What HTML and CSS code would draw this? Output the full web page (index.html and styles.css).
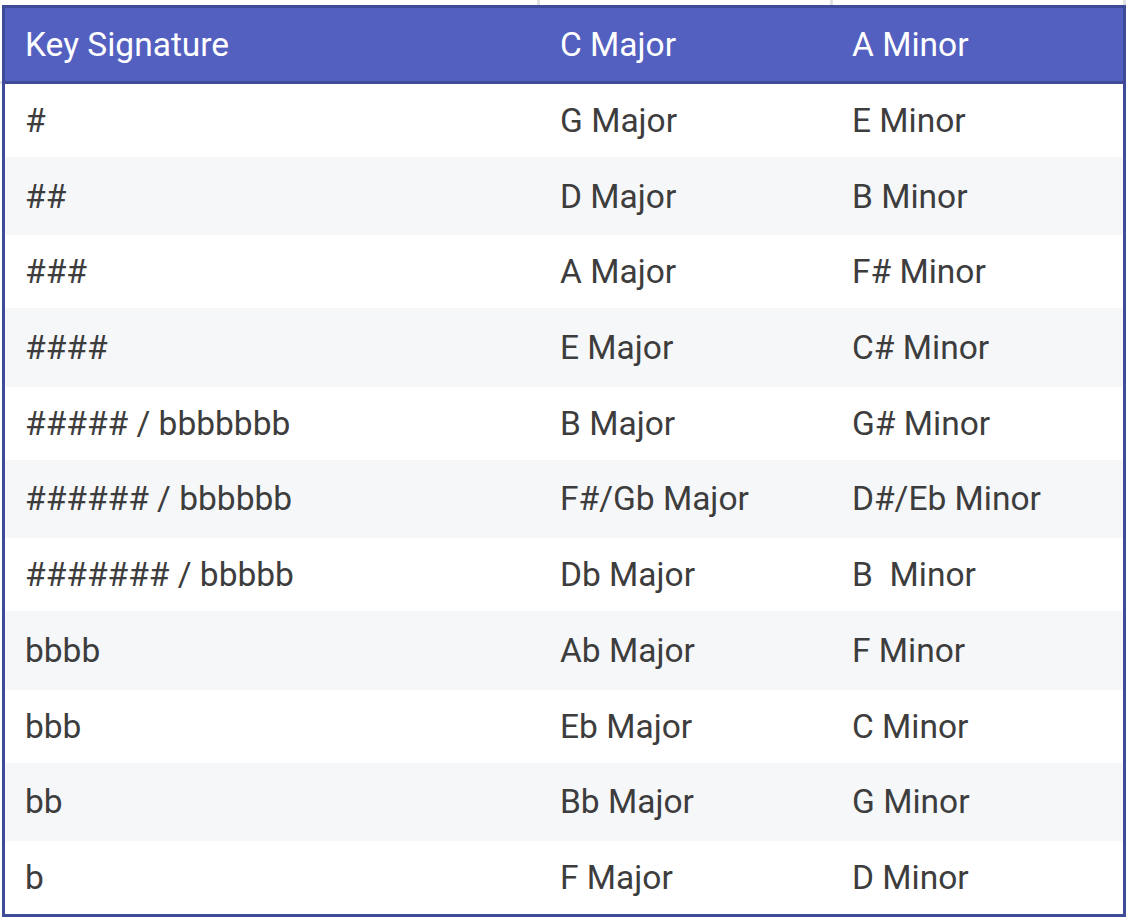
FILE: index.html
```html
<!DOCTYPE html>
<html lang="en">
<head>
<meta charset="utf-8">
<title>Key Signatures</title>
<link rel="stylesheet" href="styles.css">
</head>
<body>
<div class="sheet">
<table class="keys">
  <colgroup>
    <col class="c1">
    <col class="c2">
    <col class="c3">
  </colgroup>
  <thead>
    <tr><th>Key Signature</th><th>C Major</th><th>A Minor</th></tr>
  </thead>
  <tbody>
    <tr><td>#</td><td>G Major</td><td>E Minor</td></tr>
    <tr><td>##</td><td>D Major</td><td>B Minor</td></tr>
    <tr><td>###</td><td>A Major</td><td>F# Minor</td></tr>
    <tr><td>####</td><td>E Major</td><td>C# Minor</td></tr>
    <tr><td>##### / bbbbbbb</td><td>B Major</td><td>G# Minor</td></tr>
    <tr><td>###### / bbbbbb</td><td>F#/Gb Major</td><td>D#/Eb Minor</td></tr>
    <tr><td>####### / bbbbb</td><td>Db Major</td><td>B&nbsp; Minor</td></tr>
    <tr><td>bbbb</td><td>Ab Major</td><td>F Minor</td></tr>
    <tr><td>bbb</td><td>Eb Major</td><td>C Minor</td></tr>
    <tr><td>bb</td><td>Bb Major</td><td>G Minor</td></tr>
    <tr><td>b</td><td>F Major</td><td>D Minor</td></tr>
  </tbody>
</table>
</div>
</body>
</html>
```
FILE: styles.css
```css
html, body {
  margin: 0;
  padding: 0;
  background: #ffffff;
}

.sheet {
  width: 1130px;
  height: 922px;
  padding: 5px 0 0 2px;
  box-sizing: border-box;
  background-image:
    linear-gradient(#e2e2e2, #e2e2e2),
    linear-gradient(#e2e2e2, #e2e2e2),
    linear-gradient(#e2e2e2, #e2e2e2),
    linear-gradient(#e2e2e2, #e2e2e2);
  background-size: 3px 6px, 3px 6px, 3px 6px, 2px 3px;
  background-position: 537px 0, 830px 0, 1123px 0, 0 81px;
  background-repeat: no-repeat;
}

.keys {
  width: 1124px;
  table-layout: fixed;
  border-collapse: separate;
  border-spacing: 0;
  border: 3px solid #3f4a98;
  background: #ffffff;
  font-family: Roboto, "Liberation Sans", sans-serif;
  font-size: 33.5px;
}

.c1 { width: 535px; }
.c2 { width: 292px; }
.c3 { width: 291px; }

.keys th {
  padding: 0 0 0 20px;
  background: #5360c0;
  color: #ffffff;
  font-weight: 400;
  text-align: left;
  vertical-align: middle;
  border-bottom: 3px solid #3f4a98;
  box-sizing: border-box;
  height: 76px;
}

.keys td {
  padding: 0 0 0 20px;
  color: #3d3d3d;
  vertical-align: middle;
  height: 73px;
  box-sizing: border-box;
}

.keys tbody tr:nth-child(even) td {
  background: #f6f7f9;
  height: 78.4px;
}
```
